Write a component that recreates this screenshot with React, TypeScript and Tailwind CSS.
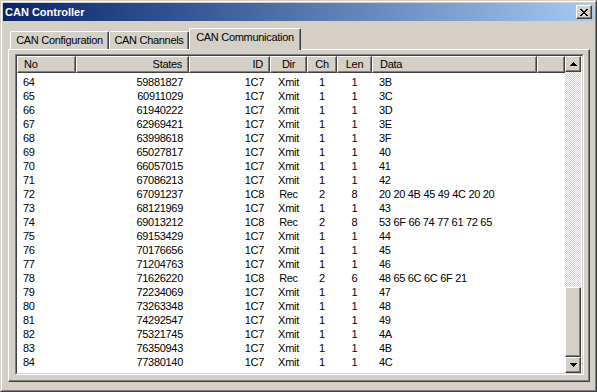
import React from "react";

type Row = [string, string, string, string, string, string, string];

const ROWS: Row[] = [
  ["64", "59881827", "1C7", "Xmit", "1", "1", "3B"],
  ["65", "60911029", "1C7", "Xmit", "1", "1", "3C"],
  ["66", "61940222", "1C7", "Xmit", "1", "1", "3D"],
  ["67", "62969421", "1C7", "Xmit", "1", "1", "3E"],
  ["68", "63998618", "1C7", "Xmit", "1", "1", "3F"],
  ["69", "65027817", "1C7", "Xmit", "1", "1", "40"],
  ["70", "66057015", "1C7", "Xmit", "1", "1", "41"],
  ["71", "67086213", "1C7", "Xmit", "1", "1", "42"],
  ["72", "67091237", "1C8", "Rec", "2", "8", "20 20 4B 45 49 4C 20 20"],
  ["73", "68121969", "1C7", "Xmit", "1", "1", "43"],
  ["74", "69013212", "1C8", "Rec", "2", "8", "53 6F 66 74 77 61 72 65"],
  ["75", "69153429", "1C7", "Xmit", "1", "1", "44"],
  ["76", "70176656", "1C7", "Xmit", "1", "1", "45"],
  ["77", "71204763", "1C7", "Xmit", "1", "1", "46"],
  ["78", "71626220", "1C8", "Rec", "2", "6", "48 65 6C 6C 6F 21"],
  ["79", "72234069", "1C7", "Xmit", "1", "1", "47"],
  ["80", "73263348", "1C7", "Xmit", "1", "1", "48"],
  ["81", "74292547", "1C7", "Xmit", "1", "1", "49"],
  ["82", "75321745", "1C7", "Xmit", "1", "1", "4A"],
  ["83", "76350943", "1C7", "Xmit", "1", "1", "4B"],
  ["84", "77380140", "1C7", "Xmit", "1", "1", "4C"],
];

// column widths + alignment, shared by header and rows
const COLS = [
  { label: "No", w: "w-[59px]", align: "text-left pl-[6px]" },
  { label: "States", w: "w-[113px]", align: "text-right pr-[6px]" },
  { label: "ID", w: "w-[81px]", align: "text-right pr-[6px]" },
  { label: "Dir", w: "w-[37px]", align: "text-center" },
  { label: "Ch", w: "w-[30px]", align: "text-center" },
  { label: "Len", w: "w-[35px]", align: "text-center" },
  { label: "Data", w: "w-[165px]", align: "text-left pl-[7px]" },
];

const raised =
  "border border-t-white border-l-white border-r-[#404040] border-b-[#404040] shadow-[inset_-1px_-1px_#808080] bg-[#d4d0c8]";

function CloseGlyph() {
  const px = [
    [0, 0], [1, 0], [6, 0], [7, 0],
    [1, 1], [2, 1], [5, 1], [6, 1],
    [2, 2], [3, 2], [4, 2], [5, 2],
    [3, 3], [4, 3],
    [2, 4], [3, 4], [4, 4], [5, 4],
    [1, 5], [2, 5], [5, 5], [6, 5],
    [0, 6], [1, 6], [6, 6], [7, 6],
  ];
  return (
    <svg width="8" height="7" viewBox="0 0 8 7" shapeRendering="crispEdges">
      {px.map(([x, y]) => (
        <rect key={`${x}-${y}`} x={x} y={y} width="1" height="1" fill="#000" />
      ))}
    </svg>
  );
}

function Arrow({ up }: { up?: boolean }) {
  return (
    <svg width="7" height="4" viewBox="0 0 7 4" shapeRendering="crispEdges">
      {up ? (
        <path d="M3 0h1v1h1v1h1v1h1v1H0V3h1V2h1V1h1z" fill="#000" />
      ) : (
        <path d="M0 0h7v1H6v1H5v1H4v1H3V3H2V2H1V1H0z" fill="#000" />
      )}
    </svg>
  );
}

function Tab({ label, w, active }: { label: string; w: string; active?: boolean }) {
  return (
    <div
      className={
        active
          ? `${w} h-[22px] -mb-px relative z-10 border-t border-l border-r border-t-white border-l-white border-r-[#404040] shadow-[inset_-1px_0_#808080] bg-[#d4d0c8] rounded-t-[2px] pt-px text-center leading-[14px]`
          : `${w} h-[18px] border-t border-l border-r border-t-white border-l-white border-r-[#404040] shadow-[inset_-1px_0_#808080] bg-[#d4d0c8] rounded-t-[2px] pt-px text-center leading-[14px]`
      }
    >
      {label}
    </div>
  );
}

export default function App() {
  return (
    <div className="w-[597px] h-[392px] border border-t-[#d4d0c8] border-l-[#d4d0c8] border-r-[#404040] border-b-[#404040] font-[Liberation_Sans,Arial,sans-serif] text-[11px] text-black">
      <div className="h-full border border-t-white border-l-white border-r-[#808080] border-b-[#808080] bg-[#d4d0c8] p-px flex flex-col">
        {/* title bar */}
        <div className="h-[18px] flex items-center justify-between bg-linear-to-r from-[#0a246a] to-[#a6caf0] pl-[2px] pr-[2px]">
          <span className="font-bold text-white mt-px">CAN Controller</span>
          <div className={`w-[16px] h-[14px] flex items-center justify-center ${raised}`}>
            <CloseGlyph />
          </div>
        </div>

        <div className="flex-1 flex flex-col pt-[7px] pl-[5px] pr-[4px] pb-[7px] tracking-[-0.3px]">
          {/* tabs */}
          <div className="h-[21px] flex items-end pl-[2px]">
            <Tab label="CAN Configuration" w="w-[99px]" />
            <Tab label="CAN Channels" w="w-[80px]" />
            <Tab label="CAN Communication" w="w-[112px]" active />
          </div>

          {/* tab panel */}
          <div className="flex-1 border border-t-white border-l-white border-r-[#404040] border-b-[#404040] shadow-[inset_-1px_-1px_#808080] pt-[4px] pl-[6px] pr-[5px] pb-[6px] flex">
            {/* list view */}
            <div className="flex-1 border border-t-[#808080] border-l-[#808080] border-r-white border-b-white flex">
              <div className="flex-1 border border-t-[#404040] border-l-[#404040] border-r-[#d4d0c8] border-b-[#d4d0c8] bg-white flex">
                <div className="w-[548px] flex flex-col">
                  <div className="h-[17px] flex">
                    {COLS.map((c) => (
                      <div key={c.label} className={`${c.w} ${c.align} ${raised} leading-[14px]`}>
                        {c.label}
                      </div>
                    ))}
                    <div className={`flex-1 ${raised}`} />
                  </div>
                  <div className="pt-[2px] flex flex-col">
                    {ROWS.map((r) => (
                      <div key={r[0]} className="h-[14px] flex leading-[14px] whitespace-nowrap">
                        {r.map((v, i) => (
                          <div key={i} className={`${COLS[i].w} ${COLS[i].align}`}>
                            {v}
                          </div>
                        ))}
                      </div>
                    ))}
                  </div>
                </div>

                {/* scrollbar */}
                <div className="w-[16px] flex flex-col">
                  <div className={`h-[16px] flex items-center justify-center ${raised}`}>
                    <Arrow up />
                  </div>
                  <div className="flex-1 bg-[image:repeating-conic-gradient(#ffffff_0%_25%,#d4d0c8_0%_50%)] bg-[length:2px_2px]" />
                  <div className={`h-[70px] ${raised}`} />
                  <div className={`h-[16px] flex items-center justify-center ${raised}`}>
                    <Arrow />
                  </div>
                </div>
              </div>
            </div>
          </div>
        </div>
      </div>
    </div>
  );
}
